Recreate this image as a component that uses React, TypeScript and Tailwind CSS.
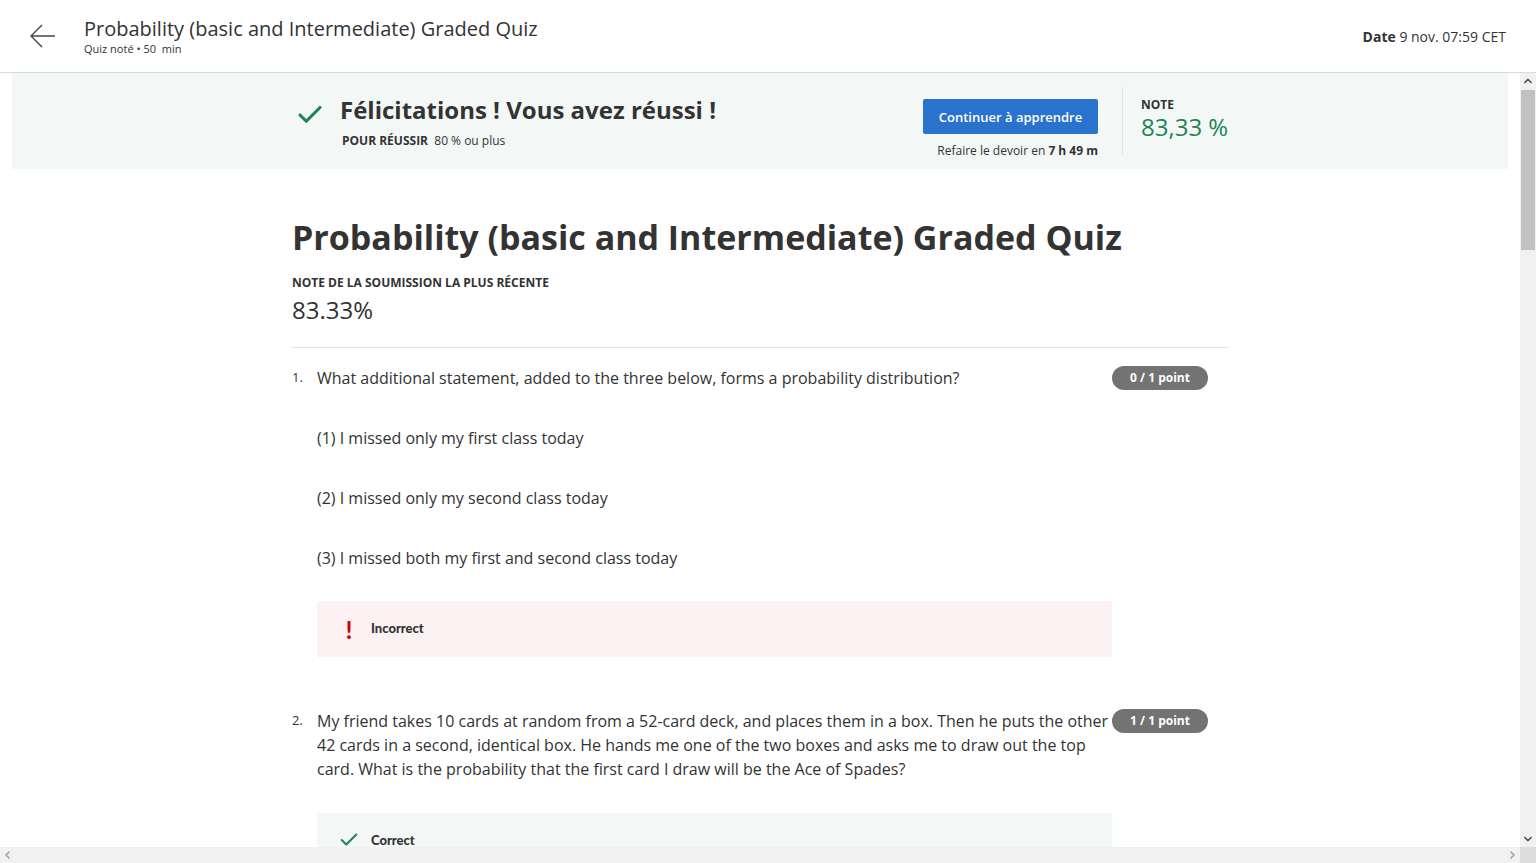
import { Check } from 'lucide-react';

const font = { fontFamily: '"Open Sans", "Liberation Sans", sans-serif' };

const PointBadge = ({ label }: { label: string }) => (
  <div className="shrink-0 w-[96px] h-[24px] rounded-full bg-[#737373] text-white text-[12px] font-bold flex items-center justify-center">
    {label}
  </div>
);

const App = () => {
  return (
    <div className="h-screen w-full flex flex-col bg-white text-[#333] overflow-hidden" style={font}>
      {/* Header */}
      <header className="h-[73px] shrink-0 border-b border-[#dadada] flex items-center px-[30px]">
        <svg width="26" height="24" viewBox="0 0 26 24" fill="none" stroke="#444" strokeWidth="1.4" className="mr-[28px]">
          <path d="M25 12H2M12 1L1 12l11 11" />
        </svg>
        <div className="flex flex-col">
          <div className="text-[20px] leading-[26px] text-[#333]">Probability (basic and Intermediate) Graded Quiz</div>
          <div className="text-[11px] leading-[14px] text-[#333]">Quiz noté • 50&nbsp; min</div>
        </div>
        <div className="ml-auto text-[14px] text-[#333]">
          <span className="font-bold">Date</span> 9 nov. 07:59 CET
        </div>
      </header>

      <div className="flex flex-1 min-h-0">
        <main className="flex-1 overflow-hidden">
          {/* Result banner */}
          <div className="mx-[12px] h-[96px] bg-[#f3f8f6] flex justify-center">
            <div className="w-[936px] flex items-start">
              <Check size={30} strokeWidth={2.5} className="text-[#1f8354] mt-[27px] ml-[3px] mr-[15px]" />
              <div className="flex flex-col mt-[21px]">
                <div className="text-[24px] leading-[32px] font-bold text-[#333]">Félicitations ! Vous avez réussi !</div>
                <div className="text-[12px] leading-[20px] mt-[5px] ml-[2px]">
                  <span className="font-bold">POUR RÉUSSIR</span>&nbsp; 80 % ou plus
                </div>
              </div>
              <div className="ml-auto flex flex-col items-end mt-[26px]">
                <button className="w-[175px] h-[35px] bg-[#2a73cc] text-white text-[13px] font-semibold rounded-[2px] pt-[2px]">
                  Continuer à apprendre
                </button>
                <div className="text-[12px] leading-[16px] mt-[9px]">
                  Refaire le devoir en <span className="font-bold">7 h 49 m</span>
                </div>
              </div>
              <div className="w-px h-[67px] bg-[#dde3e1] mt-[14px] ml-[24px] mr-[18px]" />
              <div className="flex flex-col mt-[24px] w-[87px] whitespace-nowrap">
                <div className="text-[12px] leading-[16px] font-bold">NOTE</div>
                <div className="text-[24px] leading-[28px] text-[#1f8354]">83,33 %</div>
              </div>
            </div>
          </div>

          {/* Quiz body */}
          <div className="w-[936px] mx-auto">
            <h1 className="text-[34px] leading-[48px] font-bold text-[#333] mt-[44px]">
              Probability (basic and Intermediate) Graded Quiz
            </h1>
            <div className="text-[12px] leading-[16px] font-bold mt-[14px]">NOTE DE LA SOUMISSION LA PLUS RÉCENTE</div>
            <div className="text-[24px] leading-[30px] mt-[4px]">83.33%</div>
            <div className="h-px bg-[#e5e5e5] mt-[22px]" />

            {/* Question 1 */}
            <div className="flex mt-[18px] pr-[20px]">
              <div className="w-[25px] text-[13px] leading-[22px]">1.</div>
              <div className="flex-1 text-[16px] leading-[24px]">
                What additional statement, added to the three below, forms a probability distribution?
              </div>
              <PointBadge label="0 / 1 point" />
            </div>
            <div className="ml-[25px] w-[795px]">
              <div className="text-[16px] leading-[24px] mt-[36px]">(1) I missed only my first class today</div>
              <div className="text-[16px] leading-[24px] mt-[36px]">(2) I missed only my second class today</div>
              <div className="text-[16px] leading-[24px] mt-[36px]">(3) I missed both my first and second class today</div>
              <div className="h-[56px] bg-[#fdf2f3] mt-[31px] flex items-center pl-[18px]">
                <span className="text-[#d30000] text-[25px] leading-[28px] font-bold w-[28px] text-center" style={{ fontFamily: 'Lato, sans-serif' }}>!</span>
                <span className="text-[13px] font-black ml-[8px]" style={{ fontFamily: 'Lato, sans-serif' }}>Incorrect</span>
              </div>
            </div>

            {/* Question 2 */}
            <div className="flex mt-[52px] pr-[20px]">
              <div className="w-[25px] text-[13px] leading-[22px]">2.</div>
              <div className="flex-1 text-[16px] leading-[24px]">
                My friend takes 10 cards at random from a 52-card deck, and places them in a box. Then he puts the other 42 cards in a second, identical box. He hands me one of the two boxes and asks me to draw out the top card. What is the probability that the first card I draw will be the Ace of Spades?
              </div>
              <PointBadge label="1 / 1 point" />
            </div>
            <div className="ml-[25px] w-[795px]">
              <div className="h-[56px] bg-[#f3f8f6] mt-[32px] flex items-center pl-[21px] pt-[16px] pb-[18px]">
                <Check size={22} strokeWidth={2.2} className="text-[#1f8354] mr-[11px]" />
                <span className="text-[13px] font-black leading-[22px]" style={{ fontFamily: 'Lato, sans-serif' }}>Correct</span>
              </div>
            </div>
          </div>
        </main>

        {/* Vertical scrollbar */}
        <div className="w-[16px] shrink-0 bg-[#f1f1f1] flex flex-col items-center">
          <svg width="16" height="16" viewBox="0 0 16 16" className="shrink-0">
            <path d="M4.5 10L8 6.5 11.5 10" fill="none" stroke="#505050" strokeWidth="1.6" />
          </svg>
          <div className="w-[14px] h-[160px] bg-[#c1c1c1] mt-[1px]" />
          <div className="flex-1" />
          <svg width="16" height="16" viewBox="0 0 16 16" className="shrink-0">
            <path d="M4.5 6L8 9.5 11.5 6" fill="none" stroke="#505050" strokeWidth="1.6" />
          </svg>
        </div>
      </div>

      {/* Horizontal scrollbar */}
      <div className="h-[16px] shrink-0 flex">
        <div className="flex-1 bg-[#f1f1f1] flex items-center justify-between">
          <svg width="16" height="16" viewBox="0 0 16 16">
            <path d="M9.5 4.5L6 8l3.5 3.5" fill="none" stroke="#a3a3a3" strokeWidth="1.6" />
          </svg>
          <svg width="16" height="16" viewBox="0 0 16 16">
            <path d="M6.5 4.5L10 8l-3.5 3.5" fill="none" stroke="#a3a3a3" strokeWidth="1.6" />
          </svg>
        </div>
        <div className="w-[16px] bg-[#dcdcdc]" />
      </div>
    </div>
  );
};

export default App;
